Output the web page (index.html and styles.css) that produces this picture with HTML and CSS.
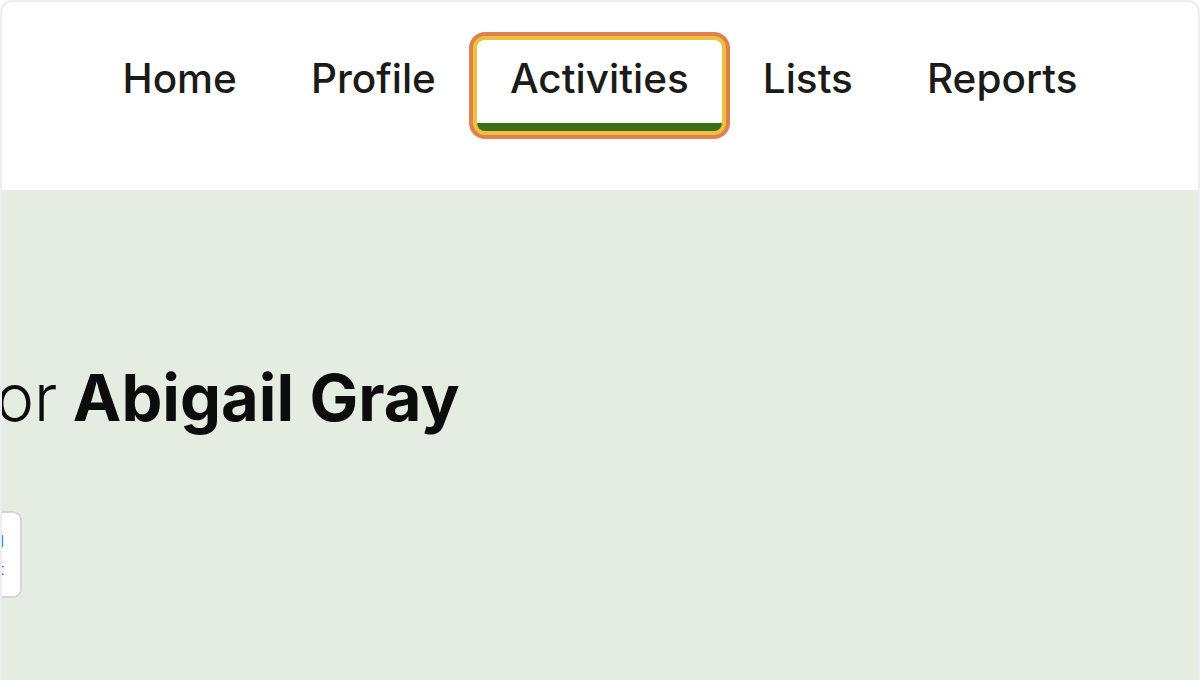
FILE: index.html
```html
<!DOCTYPE html>
<html lang="en">
<head>
<meta charset="utf-8">
<title>Activities</title>
<link rel="stylesheet" href="styles.css">
</head>
<body>
<div class="frame">
  <header class="topbar">
    <nav class="tabs">
      <a class="tab" href="#">Home</a>
      <a class="tab" href="#">Profile</a>
      <a class="tab tab-active" href="#">Activities</a>
      <a class="tab" href="#">Lists</a>
      <a class="tab" href="#">Reports</a>
    </nav>
  </header>
  <main class="content">
    <h1 class="title"><span class="title-light">Activities for</span> <strong class="title-name">Abigail Gray</strong></h1>
    <div class="card">
      <span class="card-link">Add</span>
      <span class="card-link">Edit</span>
    </div>
  </main>
</div>
</body>
</html>
```

FILE: styles.css
```css
* { box-sizing: border-box; }
html, body {
  margin: 0;
  padding: 0;
  background: #ffffff;
}
body {
  font-family: Inter, "Noto Sans", "Liberation Sans", sans-serif;
  color: #1b1c19;
}
.frame {
  width: 1200px;
  height: 680px;
  border: 2px solid #eeedf4;
  border-bottom: none;
  border-radius: 12px 12px 0 0;
  overflow: hidden;
  display: flex;
  flex-direction: column;
  background: #e5ede2;
}
.topbar {
  background: #ffffff;
  height: 189px;
  padding-top: 38px;
  border-bottom: 1px solid #e9eee7;
  flex: none;
}
.tabs {
  display: flex;
  justify-content: center;
  gap: 8px;
  padding-left: 0;
}
.tab {
  display: block;
  padding: 14px 33px 19px;
  font-size: 40.5px;
  line-height: 50px;
  font-weight: 500;
  color: #1b1c19;
  text-decoration: none;
  border-bottom: 8px solid transparent;
  border-radius: 8px 8px 0 0;
}
.tab-active {
  background: #ffffff;
  border-bottom-color: #3c6e17;
  border-radius: 8px;
  box-shadow: 0 0 0 4px #edc040, 0 0 0 8px #e0804f;
}
.content {
  flex: 1;
  padding-top: 168px;
}
.title {
  margin: 0 0 0 -317px;
  font-size: 65px;
  line-height: 78px;
  white-space: nowrap;
  color: #0c0c0c;
}
.title-light {
  font-weight: 300;
}
.title-name {
  font-weight: 700;
}
.card {
  margin: 74px 0 0 -200px;
  width: 220px;
  height: 87px;
  background: #ffffff;
  border: 2px solid #d6d6d6;
  border-radius: 9px;
  display: flex;
  flex-direction: column;
  align-items: flex-end;
  justify-content: center;
  gap: 8px;
  padding-right: 16px;
}
.card-link {
  font-size: 16px;
  color: #2a6fdb;
}
```
